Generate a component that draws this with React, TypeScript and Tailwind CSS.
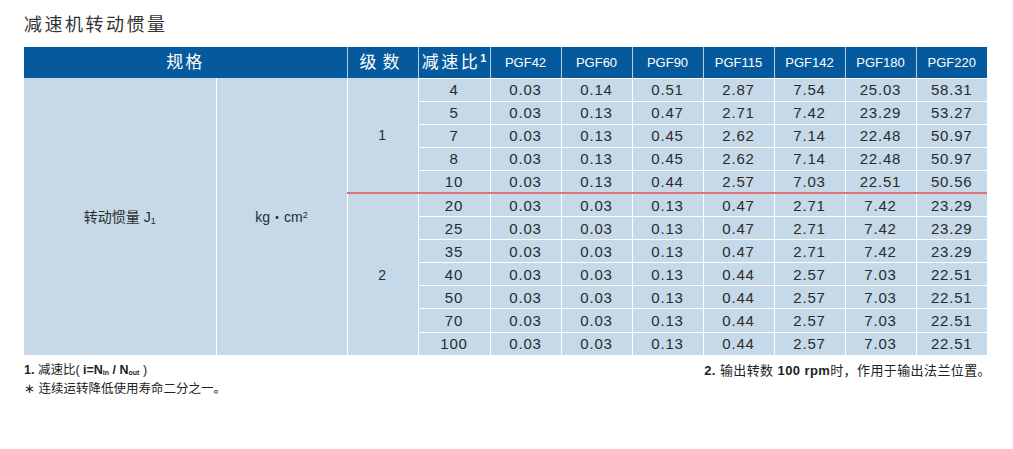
const ratios = [4, 5, 7, 8, 10, 20, 25, 35, 40, 50, 70, 100];

const rows: string[][] = [
  ["0.03", "0.14", "0.51", "2.87", "7.54", "25.03", "58.31"],
  ["0.03", "0.13", "0.47", "2.71", "7.42", "23.29", "53.27"],
  ["0.03", "0.13", "0.45", "2.62", "7.14", "22.48", "50.97"],
  ["0.03", "0.13", "0.45", "2.62", "7.14", "22.48", "50.97"],
  ["0.03", "0.13", "0.44", "2.57", "7.03", "22.51", "50.56"],
  ["0.03", "0.03", "0.13", "0.47", "2.71", "7.42", "23.29"],
  ["0.03", "0.03", "0.13", "0.47", "2.71", "7.42", "23.29"],
  ["0.03", "0.03", "0.13", "0.47", "2.71", "7.42", "23.29"],
  ["0.03", "0.03", "0.13", "0.44", "2.57", "7.03", "22.51"],
  ["0.03", "0.03", "0.13", "0.44", "2.57", "7.03", "22.51"],
  ["0.03", "0.03", "0.13", "0.44", "2.57", "7.03", "22.51"],
  ["0.03", "0.03", "0.13", "0.44", "2.57", "7.03", "22.51"],
];

const models = ["PGF42", "PGF60", "PGF90", "PGF115", "PGF142", "PGF180", "PGF220"];

export default function App() {
  return (
    <div className="w-[1013px] h-[449px] bg-white pl-6 pt-[14px] font-['Liberation_Sans','Noto_Sans_CJK_SC',sans-serif] text-[#2b2b2b]">
      <h1 className="text-[18px] leading-[22px] tracking-[2.5px] text-[#333]">减速机转动惯量</h1>

      <table className="mt-[11px] w-[963px] table-fixed border-collapse">
        <colgroup>
          <col className="w-[192px]" />
          <col className="w-[131px]" />
          <col className="w-[71px]" />
          <col className="w-[72px]" />
          {models.map((m) => (
            <col key={m} className="w-[71px]" />
          ))}
        </colgroup>
        <thead>
          <tr className="h-[31px] bg-[#045a9c] text-white">
            <th colSpan={2} className="border-r border-white/70 p-0 text-[17px] font-normal tracking-[2px]">
              规格
            </th>
            <th className="border-r border-white/70 p-0 text-[17px] font-normal tracking-[6px]">级数</th>
            <th className="border-r border-white/70 p-0 text-[17px] font-normal tracking-[2.5px] whitespace-nowrap">
              减速比<sup className="text-[11px] font-bold tracking-normal">1</sup>
            </th>
            {models.map((m, i) => (
              <th
                key={m}
                className={`p-0 text-[13px] font-normal ${i < models.length - 1 ? "border-r border-white/70" : ""}`}
              >
                {m}
              </th>
            ))}
          </tr>
        </thead>
        <tbody className="bg-[#c5d9e8] text-[15px] leading-[18px] tracking-[0.8px]">
          {ratios.map((r, ri) => {
            const red = ri === 5 ? "border-t-2 border-t-[#e0707a]" : "";
            return (
              <tr key={r} className="h-[23.1px]">
                {ri === 0 && (
                  <>
                    <td rowSpan={12} className="border-r border-white p-0 pt-px text-center text-[14px] tracking-normal">
                      转动惯量 J<sub className="text-[9px]">1</sub>
                    </td>
                    <td rowSpan={12} className="border-r border-white p-0 pt-px text-center text-[14px] tracking-normal">
                      kg・cm<sup className="text-[9px]">2</sup>
                    </td>
                  </>
                )}
                {ri === 0 && (
                  <td rowSpan={5} className="border-r border-white p-0 text-center text-[14px]">
                    1
                  </td>
                )}
                {ri === 5 && (
                  <td rowSpan={7} className={`border-r border-white p-0 text-center text-[14px] ${red}`}>
                    2
                  </td>
                )}
                <td className={`border border-white p-0 pt-px text-center ${red}`}>{r}</td>
                {rows[ri].map((v, vi) => (
                  <td
                    key={vi}
                    className={`border-t border-white p-0 pt-px text-center ${vi < 6 ? "border-r" : ""} ${red} ${
                      ri === 11 ? "border-b-0" : "border-b"
                    }`}
                  >
                    {v}
                  </td>
                ))}
              </tr>
            );
          })}
        </tbody>
      </table>

      <div className="mt-[5px] flex w-[967px] items-start justify-between text-[#222]">
        <div className="text-[12.5px] leading-[19px]">
          <div>
            <b>1.</b> 减速比( <b>i=N<sub className="text-[7px]">in</sub> / N<sub className="text-[7px]">out</sub></b> )
          </div>
          <div>∗ 连续运转降低使用寿命二分之一。</div>
        </div>
        <div className="text-[13px] leading-[19px] tracking-[0.4px]">
          <b>2.</b> 输出转数 <b>100 rpm</b>时，作用于输出法兰位置。
        </div>
      </div>
    </div>
  );
}
